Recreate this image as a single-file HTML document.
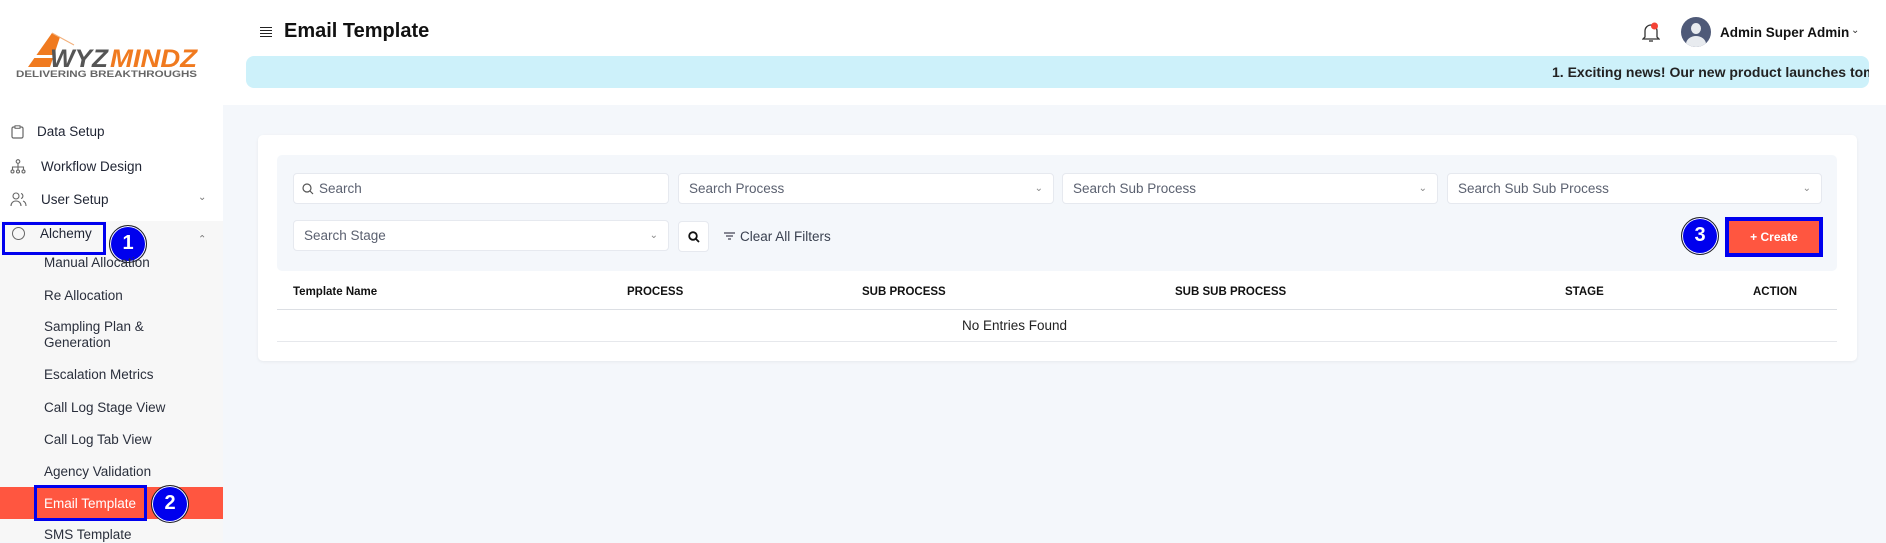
<!DOCTYPE html>
<html><head><meta charset="utf-8"><style>
*{box-sizing:border-box;margin:0;padding:0}
body{width:1886px;height:542px;overflow:hidden;background:#f4f7fb;font-family:"Liberation Sans",sans-serif;color:#1f2433;position:relative}
.abs{position:absolute}
.side{left:0;top:0;width:223px;height:542px;background:#fff}
.alc{left:0;top:221px;width:223px;height:321px;background:#f7f7f7}
.si{position:absolute;font-size:13.5px;color:#1f2433;white-space:nowrap}
.sub{position:absolute;left:44px;font-size:13.5px;color:#2a2f3c;white-space:nowrap;line-height:16px}
.hdr{left:223px;top:0;width:1663px;height:105px;background:#fff}
.badge{position:absolute;width:38px;height:38px;border-radius:50%;background:#0000ee;border:1.5px solid #222;box-shadow:0 0 0 1px #fff inset;color:#fff;font-weight:bold;font-size:20px;text-align:center;line-height:35px}
.inp{position:absolute;height:31px;background:#fff;border:1px solid #e6e9ef;border-radius:4px;font-size:13.5px;color:#5b6170;line-height:29px;padding-left:10px}
.chev{position:absolute;right:10px;top:0;font-size:10px;color:#888}
.th{position:absolute;top:286px;font-size:11.5px;font-weight:bold;color:#111}
</style></head><body>
<div class="abs side"></div>
<div class="abs alc"></div>
<!-- logo -->
<svg class="abs" style="left:14px;top:28px" width="190" height="52" viewBox="0 0 190 52">
<polygon points="38,5 14,39 36,39 46,9" fill="#f07a1f"/>
<line x1="38" y1="5" x2="60" y2="17" stroke="#f3b07a" stroke-width="1"/>
<polygon points="20,27 42,27 41,30 18,30" fill="#fff"/>
<text x="36" y="39" font-family="Liberation Sans" font-weight="bold" font-style="italic" font-size="25" fill="#555" textLength="58" lengthAdjust="spacingAndGlyphs">WYZ</text>
<text x="96" y="39" font-family="Liberation Sans" font-weight="bold" font-style="italic" font-size="25" fill="#f07a1f" textLength="87" lengthAdjust="spacingAndGlyphs">MINDZ</text>
<text x="2" y="49" font-family="Liberation Sans" font-weight="bold" font-size="9" fill="#666" textLength="181" lengthAdjust="spacingAndGlyphs">DELIVERING  BREAKTHROUGHS</text>
</svg>
<!-- sidebar items -->
<svg class="abs" style="left:11px;top:125px" width="13" height="14" viewBox="0 0 13 14"><rect x="1" y="2" width="11" height="11" rx="1.5" fill="none" stroke="#666" stroke-width="1.2"/><rect x="4" y="0.8" width="5" height="2.5" fill="#fff" stroke="#666" stroke-width="1"/></svg>
<div class="si" style="left:37px;top:124px">Data Setup</div>
<svg class="abs" style="left:10px;top:159px" width="16" height="15" viewBox="0 0 16 15"><g fill="none" stroke="#666" stroke-width="1.1"><circle cx="8" cy="2.5" r="1.8"/><path d="M8 4.5V8M2.5 11V8h11v3M8 8v3"/><circle cx="2.5" cy="12.5" r="1.5"/><circle cx="8" cy="12.5" r="1.5"/><circle cx="13.5" cy="12.5" r="1.5"/></g></svg>
<div class="si" style="left:41px;top:159px">Workflow Design</div>
<svg class="abs" style="left:10px;top:192px" width="17" height="15" viewBox="0 0 17 15"><g fill="none" stroke="#666" stroke-width="1.1"><circle cx="6" cy="4" r="3"/><path d="M1 14c0-3 2-5 5-5s5 2 5 5"/><path d="M11 1.5a2.6 2.6 0 010 5M13 9c2 .7 3 2.5 3 5"/></g></svg>
<div class="si" style="left:41px;top:192px">User Setup</div>
<div class="si" style="left:198px;top:192px;font-size:10px;color:#777">&#8964;</div>
<div class="abs" style="left:12px;top:227px;width:13px;height:13px;border:1.5px solid #666;border-radius:50%"></div>
<div class="si" style="left:40px;top:226px">Alchemy</div>
<div class="si" style="left:198px;top:232px;font-size:10px;color:#777;transform:rotate(180deg)">&#8964;</div>
<div class="abs" style="left:2px;top:222px;width:104px;height:33px;border:3px solid #0000ee"></div>
<div class="badge" style="left:109px;top:225px">1</div>
<div class="sub" style="top:255px">Manual Allocation</div>
<div class="sub" style="top:288px">Re Allocation</div>
<div class="sub" style="top:319px">Sampling Plan &amp;<br>Generation</div>
<div class="sub" style="top:367px">Escalation Metrics</div>
<div class="sub" style="top:400px">Call Log Stage View</div>
<div class="sub" style="top:432px">Call Log Tab View</div>
<div class="sub" style="top:464px">Agency Validation</div>
<div class="abs" style="left:0;top:487px;width:223px;height:32px;background:#ff5640"></div>
<div class="sub" style="top:496px;color:#fff">Email Template</div>
<div class="abs" style="left:34px;top:485px;width:113px;height:36px;border:3px solid #0000ee"></div>
<div class="badge" style="left:151px;top:485px">2</div>
<div class="sub" style="top:527px">SMS Template</div>
<!-- header -->
<div class="abs hdr"></div>
<div class="abs" style="left:260px;top:27px;width:12px;height:10px;border-top:1.5px solid #222;border-bottom:1.5px solid #222"><div style="margin-top:2px;border-top:1.5px solid #222"></div><div style="margin-top:1.6px;border-top:1.5px solid #222"></div></div>
<div class="abs" style="left:284px;top:20px;font-size:20px;font-weight:bold;color:#111">Email Template</div>
<svg class="abs" style="left:1642px;top:21px" width="18" height="22" viewBox="0 0 18 22"><path d="M3 16V10a6 6 0 0112 0v6l2 2H1z" fill="none" stroke="#333" stroke-width="1.3"/><path d="M7 20h4" stroke="#333" stroke-width="1.3"/><circle cx="12.5" cy="5" r="3.5" fill="#f44336"/></svg>
<div class="abs" style="left:1681px;top:17px;width:30px;height:30px;border-radius:50%;background:#4f5a78;overflow:hidden"><div style="position:absolute;left:10px;top:6px;width:10px;height:11px;border-radius:50%;background:#e8ebef"></div><div style="position:absolute;left:5px;top:19px;width:20px;height:16px;border-radius:50%;background:#e8ebef"></div></div>
<div class="abs" style="left:1720px;top:25px;font-size:13.5px;font-weight:bold;color:#111">Admin Super Admin</div>
<div class="abs" style="left:1851px;top:25px;font-size:10px;color:#333">&#8964;</div>
<div class="abs" style="left:246px;top:56px;width:1623px;height:32px;background:#cdf1fa;border-radius:8px;overflow:hidden"><div style="position:absolute;left:1306px;top:8px;font-size:14px;font-weight:bold;color:#222;white-space:nowrap">1. Exciting news! Our new product launches tomorrow</div></div>
<!-- card -->
<div class="abs" style="left:258px;top:135px;width:1599px;height:226px;background:#fff;border-radius:5px;box-shadow:0 1px 3px rgba(0,0,0,.06)"></div>
<div class="abs" style="left:277px;top:155px;width:1560px;height:116px;background:#f4f7fb;border-radius:5px"></div>
<div class="inp" style="left:293px;top:173px;width:376px;padding-left:25px"><svg style="position:absolute;left:8px;top:9px" width="12" height="12" viewBox="0 0 12 12"><circle cx="5" cy="5" r="4" fill="none" stroke="#555" stroke-width="1.2"/><path d="M8 8l3 3" stroke="#555" stroke-width="1.2"/></svg>Search</div>
<div class="inp" style="left:678px;top:173px;width:376px">Search Process<span class="chev">&#8964;</span></div>
<div class="inp" style="left:1062px;top:173px;width:376px">Search Sub Process<span class="chev">&#8964;</span></div>
<div class="inp" style="left:1447px;top:173px;width:375px">Search Sub Sub Process<span class="chev">&#8964;</span></div>
<div class="inp" style="left:293px;top:220px;width:376px">Search Stage<span class="chev">&#8964;</span></div>
<div class="inp" style="left:678px;top:221px;width:31px;padding:0"><svg style="position:absolute;left:9px;top:9px" width="12" height="12" viewBox="0 0 12 12"><circle cx="5" cy="5" r="3.8" fill="none" stroke="#111" stroke-width="1.8"/><path d="M8 8l3 3" stroke="#111" stroke-width="1.8"/></svg></div>
<svg class="abs" style="left:724px;top:232px" width="11" height="8" viewBox="0 0 11 8"><path d="M0 1h11M2 4h7M4 7h3" stroke="#445" stroke-width="1.2"/></svg>
<div class="abs" style="left:740px;top:229px;font-size:13.5px;color:#3a4150">Clear All Filters</div>
<div class="badge" style="left:1681px;top:217px">3</div>
<div class="abs" style="left:1725px;top:217px;width:98px;height:40px;border:4px solid #0000ee;background:#ff5640;color:#fff;font-weight:bold;font-size:12px;text-align:center;line-height:32px">+ Create</div>
<div class="th" style="left:293px">Template Name</div>
<div class="th" style="left:627px">PROCESS</div>
<div class="th" style="left:862px">SUB PROCESS</div>
<div class="th" style="left:1175px">SUB SUB PROCESS</div>
<div class="th" style="left:1565px">STAGE</div>
<div class="th" style="left:1753px">ACTION</div>
<div class="abs" style="left:277px;top:309px;width:1560px;height:1px;background:#dcdfe4"></div>
<div class="abs" style="left:962px;top:318px;font-size:13.5px;color:#222">No Entries Found</div>
<div class="abs" style="left:277px;top:341px;width:1560px;height:1px;background:#e6e8ec"></div>
</body></html>
